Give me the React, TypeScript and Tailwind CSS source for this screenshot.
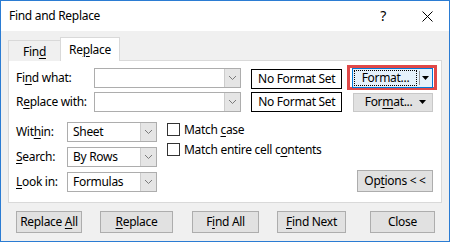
import React from "react";

const U = ({ children }: { children: React.ReactNode }) => (
  <span className="underline decoration-1 underline-offset-[2px]">{children}</span>
);

const Chevron = ({ color = "#7a7a7a" }: { color?: string }) => (
  <svg width="9" height="6" viewBox="0 0 9 6">
    <polyline points="1,1 4.5,4.5 8,1" fill="none" stroke={color} strokeWidth="1" />
  </svg>
);

const Tri = () => (
  <svg width="7" height="4" viewBox="0 0 7 4">
    <polygon points="0,0 7,0 3.5,4" fill="#000" />
  </svg>
);

const Combo = ({ w, value }: { w: string; value?: string }) => (
  <div className={`${w} h-[20px] border border-[#adadad] bg-white flex`}>
    <div className="flex-1 flex items-center pl-[5px] text-black">{value}</div>
    <div className="w-[16px] h-full bg-[#e5e5e5] border-l border-[#cccccc] flex items-center justify-center">
      <Chevron />
    </div>
  </div>
);

const Btn = ({ w, children, ml }: { w: string; children: React.ReactNode; ml?: string }) => (
  <div
    className={`${w} ${ml ?? ""} h-[22px] bg-[#e1e1e1] border border-[#adadad] flex items-center justify-center text-black`}
  >
    {children}
  </div>
);

const Check = ({ children }: { children: React.ReactNode }) => (
  <div className="flex items-center h-[13px]">
    <div className="w-[13px] h-[13px] border border-[#333333] bg-white" />
    <div className="ml-[4px] text-black leading-none">{children}</div>
  </div>
);

export default function App() {
  return (
    <div
      className="w-[452px] h-[243px] bg-white text-[12px] tracking-[-0.3px] text-black"
      style={{ fontFamily: '"Noto Sans", "Open Sans", sans-serif' }}
    >
      <div className="w-[450px] h-[242px] border border-[#2b7cd3] flex flex-col bg-[#f0f0f0]">
        {/* title bar */}
        <div className="h-[30px] bg-white flex items-center pl-[8px]">
          <span className="text-[12px]">Find and Replace</span>
          <span className="ml-auto text-[14px] leading-none">?</span>
          <svg className="ml-[36px] mr-[16px]" width="11" height="11" viewBox="0 0 11 11">
            <line x1="0.5" y1="0.5" x2="10.5" y2="10.5" stroke="#000" strokeWidth="1" />
            <line x1="10.5" y1="0.5" x2="0.5" y2="10.5" stroke="#000" strokeWidth="1" />
          </svg>
        </div>

        {/* body */}
        <div className="flex-1 px-[7px] pt-[6px] flex flex-col">
          {/* tabs */}
          <div className="flex items-end h-[24px] -mb-px relative z-10">
            <div className="w-[53px] h-[21px] border border-b-0 border-[#d9d9d9] bg-[#f0f0f0] flex items-center justify-center pt-[1px]">
              <span>
                Fin<U>d</U>
              </span>
            </div>
            <div className="w-[60px] h-[24px] -ml-px border border-b-0 border-[#d9d9d9] bg-white flex items-center justify-center">
              <span>
                Re<U>p</U>lace
              </span>
            </div>
          </div>

          {/* panel */}
          <div className="h-[143px] border border-[#d9d9d9] bg-white pl-[7px] pr-[8px] pt-[7px] flex flex-col">
            {/* row 1 */}
            <div className="flex items-center h-[20px]">
              <div className="w-[78px]">
                Fi<U>n</U>d what:
              </div>
              <Combo w="w-[148px]" />
              <div className="ml-[10px] w-[91px] h-[20px] border border-black flex items-center justify-center mt-[1px]">
                No Format Set
              </div>
              <div className="ml-[10px] relative">
                <div className="absolute -left-[5px] -top-[3px] w-[90px] h-[25px] border-[3px] border-[#e04848] pointer-events-none" />
                <div className="w-[81px] h-[20px] bg-[#e5f1fb] border border-[#0078d7] flex items-center relative">
                  <div className="flex-1 h-[16px] ml-[1px] border border-dotted border-black flex items-center justify-center">
                    Format...
                  </div>
                  <div className="w-px h-[14px] bg-[#9a9a9a] mx-[2px]" />
                  <div className="mr-[3px] flex items-center">
                    <Tri />
                  </div>
                </div>
              </div>
            </div>

            {/* row 2 */}
            <div className="flex items-center h-[20px] mt-[4px]">
              <div className="w-[78px]">
                R<U>e</U>place with:
              </div>
              <Combo w="w-[148px]" />
              <div className="ml-[10px] w-[91px] h-[20px] border border-black flex items-center justify-center">
                No Format Set
              </div>
              <div className="ml-[11px] w-[80px] h-[19px] bg-[#e1e1e1] border border-[#c8c8c8] flex items-center">
                <div className="flex-1 flex items-center justify-center pl-[4px]">
                  <span>
                    For<U>m</U>at...
                  </span>
                </div>
                <div className="mr-[6px] flex items-center">
                  <Tri />
                </div>
              </div>
            </div>

            {/* lower section */}
            <div className="flex mt-[10px]">
              <div className="flex flex-col gap-[5px]">
                <div className="flex items-center h-[20px]">
                  <div className="w-[51px]">
                    Wit<U>h</U>in:
                  </div>
                  <Combo w="w-[90px]" value="Sheet" />
                </div>
                <div className="flex items-center h-[20px]">
                  <div className="w-[51px]">
                    <U>S</U>earch:
                  </div>
                  <Combo w="w-[90px]" value="By Rows" />
                </div>
                <div className="flex items-center h-[20px]">
                  <div className="w-[51px]">
                    <U>L</U>ook in:
                  </div>
                  <Combo w="w-[90px]" value="Formulas" />
                </div>
              </div>
              <div className="ml-[10px] pt-[1px] flex flex-col gap-[7px]">
                <Check>
                  Match <U>c</U>ase
                </Check>
                <Check>
                  Match entire cell c<U>o</U>ntents
                </Check>
              </div>
              <div className="ml-auto flex items-end">
                <Btn w="w-[76px]">
                  <span>
                    Op<U>t</U>ions &lt; &lt;
                  </span>
                </Btn>
              </div>
            </div>
          </div>

          {/* buttons */}
          <div className="flex mt-[8px] pl-[8px]">
            <Btn w="w-[66px]">
              <span>
                Replace <U>A</U>ll
              </span>
            </Btn>
            <Btn w="w-[73px]" ml="ml-[18px]">
              <span>
                <U>R</U>eplace
              </span>
            </Btn>
            <Btn w="w-[67px]" ml="ml-[19px]">
              <span>
                F<U>i</U>nd All
              </span>
            </Btn>
            <Btn w="w-[69px]" ml="ml-[18px]">
              <span>
                <U>F</U>ind Next
              </span>
            </Btn>
            <Btn w="w-[65px]" ml="ml-[24px]">
              Close
            </Btn>
          </div>
        </div>
      </div>
    </div>
  );
}
